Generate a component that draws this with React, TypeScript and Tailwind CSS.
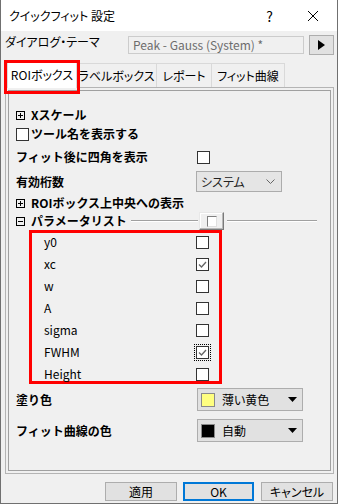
import React from "react";

function ExpandBox({ open }: { open?: boolean }) {
  return (
    <svg width="9" height="9" viewBox="0 0 9 9" className="shrink-0">
      <rect x="0.5" y="0.5" width="8" height="8" fill="none" stroke="#000" />
      <path d="M2 4.5h5" stroke="#000" />
      {!open && <path d="M4.5 2v5" stroke="#000" />}
    </svg>
  );
}

function Check({ checked, focus }: { checked?: boolean; focus?: boolean }) {
  return (
    <span className="relative block h-[13px] w-[13px] shrink-0 border border-[#333] bg-white">
      {checked && (
        <svg width="11" height="11" viewBox="0 0 11 11" className="absolute left-0 top-0">
          <path d="M2 5.5l2.5 2.5 4.5-5" fill="none" stroke="#666" strokeWidth="1.3" />
        </svg>
      )}
      {focus && <span className="absolute -inset-[3px] border border-dotted border-black" />}
    </span>
  );
}

function ColorSelect({ color, label }: { color: string; label: string }) {
  return (
    <div className="flex h-[23px] w-[106px] items-center border border-[#adadad] bg-[#e1e1e1]">
      <span className="ml-[3px] h-[14px] w-[14px] border border-[#8a8a8a]" style={{ backgroundColor: color }} />
      <span className="ml-[7px]">{label}</span>
      <svg width="9" height="5" viewBox="0 0 9 5" className="ml-auto mr-[5px]">
        <path d="M0 0h9L4.5 5z" fill="#000" />
      </svg>
    </div>
  );
}

const params = [
  { name: "y0", checked: false },
  { name: "xc", checked: true },
  { name: "w", checked: false },
  { name: "A", checked: false },
  { name: "sigma", checked: false },
  { name: "FWHM", checked: true, focus: true },
  { name: "Height", checked: false },
];

const bold = "font-bold [font-feature-settings:normal]";

export default function App() {
  return (
    <div className="relative flex h-[504px] w-[338px] flex-col border-x border-b border-[#707070] bg-[#f0f0f0] font-['Noto_Sans_CJK_JP',sans-serif] text-[12px] leading-none text-black [font-feature-settings:'palt']">
      {/* title bar */}
      <div className="flex h-[31px] shrink-0 items-center bg-white">
        <span className="pl-[8px]">クイックフィット 設定</span>
        <span className="ml-auto text-[14px]">?</span>
        <svg width="10" height="10" viewBox="0 0 10 10" className="ml-[35px] mr-[19px]">
          <path d="M0 0l10 10M10 0L0 10" stroke="#000" strokeWidth="1" />
        </svg>
      </div>

      {/* theme row */}
      <div className="mt-[4px] flex h-[20px] items-center pl-[4px] pr-[3px]">
        <span className="-mt-[6px]">ダイアログ・テーマ</span>
        <div className="ml-auto flex h-[18px] w-[176px] items-center border border-[#cccccc] bg-[#f0f0f0] pl-[4px] text-[#6d6d6d]">
          Peak - Gauss (System) *
        </div>
        <div className="ml-[5px] flex h-[20px] w-[25px] items-center justify-center border border-[#adadad] bg-[#e1e1e1]">
          <svg width="7" height="10" viewBox="0 0 7 10">
            <path d="M0 0l7 5-7 5z" fill="#000" />
          </svg>
        </div>
      </div>

      {/* tabs */}
      <div className="mt-[6px] flex h-[26px] items-end pl-[6px]">
        <div className="relative z-10 -mb-px flex h-[27px] w-[70px] items-center justify-center border border-b-0 border-[#d9d9d9] bg-white">
          ROIボックス
        </div>
        <div className="flex h-[24px] w-[80px] items-center justify-center border-r border-t border-[#d9d9d9]">
          ラベルボックス
        </div>
        <div className="flex h-[24px] w-[55px] items-center justify-center border-r border-t border-[#d9d9d9]">
          レポート
        </div>
        <div className="flex h-[24px] w-[73px] items-center justify-center border-r border-t border-[#d9d9d9]">
          フィット曲線
        </div>
      </div>
      <div className="pointer-events-none absolute left-[3px] top-[60px] z-20 h-[34px] w-[76px] border-[3px] border-[#ff0000]" />

      {/* panel */}
      <div className="ml-[4px] flex h-[387px] w-[329px] shrink-0 border border-[#b4b4b4]">
        <div className="m-[2px] flex flex-1 flex-col border border-[#a0a0a0] pl-[7px]">
          <div className="mt-[15px] flex h-[18px] items-center gap-[6px]">
            <ExpandBox />
            <span className={bold}>Xスケール</span>
          </div>
          <div className="mt-[1px] flex h-[18px] items-center gap-[2px]">
            <Check />
            <span className={bold}>ツール名を表示する</span>
          </div>
          <div className="mt-[5px] flex h-[18px] items-center">
            <span className={"w-[181px] " + bold}>フィット後に四角を表示</span>
            <Check />
          </div>
          <div className="mt-[5px] flex h-[21px] items-center">
            <span className={"w-[180px] " + bold}>有効桁数</span>
            <div className="flex h-[21px] w-[86px] items-center border border-[#acacac] bg-[#e5e5e5] pl-[4px] text-[#222]">
              システム
              <svg width="9" height="5" viewBox="0 0 9 5" className="ml-auto mr-[6px]">
                <path d="M0.5 0.5l4 4 4-4" fill="none" stroke="#666" />
              </svg>
            </div>
          </div>
          <div className="mt-[2px] flex h-[18px] items-center gap-[6px]">
            <ExpandBox />
            <span className={bold}>ROIボックス上中央への表示</span>
          </div>
          <div className="flex h-[18px] items-center">
            <ExpandBox open />
            <span className={"ml-[6px] " + bold}>パラメータリスト</span>
            <span className="ml-[4px] h-[2px] flex-1 border-b border-t border-b-white border-t-[#a0a0a0]" />
            <div className="ml-[1px] flex h-[18px] w-[25px] shrink-0 items-center justify-center border border-b-[#7a7a7a] border-l-[#e8e8e8] border-r-[#7a7a7a] border-t-[#e8e8e8] bg-[#f0f0f0] shadow-[inset_-1px_-1px_0_#b8b8b8,inset_1px_1px_0_#ffffff]">
              <span className="h-[11px] w-[10px] border border-b-[#e0e0e0] border-l-[#808080] border-r-[#e0e0e0] border-t-[#808080] bg-white" />
            </div>
            <span className="ml-[3px] mr-[13px] h-[2px] w-[90px] border-b border-t border-b-white border-t-[#a0a0a0]" />
          </div>
          <div className="ml-[13px] h-[154px] w-[193px] border-[3px] border-[#ff0000]">
            <div className="-mt-[2px] flex flex-col">
              {params.map((p) => (
                <div key={p.name} className="flex h-[22px] items-center pl-[12px]">
                  <span className="w-[152px]">{p.name}</span>
                  <Check checked={p.checked} focus={p.focus} />
                </div>
              ))}
            </div>
          </div>
          <div className="mt-[4px] flex items-center">
            <span className={"w-[181px] " + bold}>塗り色</span>
            <ColorSelect color="#ffff80" label="薄い黄色" />
          </div>
          <div className="mt-[8px] flex items-center">
            <span className={"w-[181px] " + bold}>フィット曲線の色</span>
            <ColorSelect color="#000000" label="自動" />
          </div>
        </div>
      </div>

      {/* buttons */}
      <div className="mt-[8px] flex justify-end gap-[6px] pr-[4px]">
        <button className="h-[19px] w-[72px] border border-[#adadad] bg-[#e1e1e1]">適用</button>
        <button className="h-[19px] w-[71px] border-2 border-[#0078d7] bg-[#e1e1e1]">OK</button>
        <button className="ml-[1px] h-[19px] w-[72px] border border-[#adadad] bg-[#e1e1e1]">キャンセル</button>
      </div>
    </div>
  );
}
